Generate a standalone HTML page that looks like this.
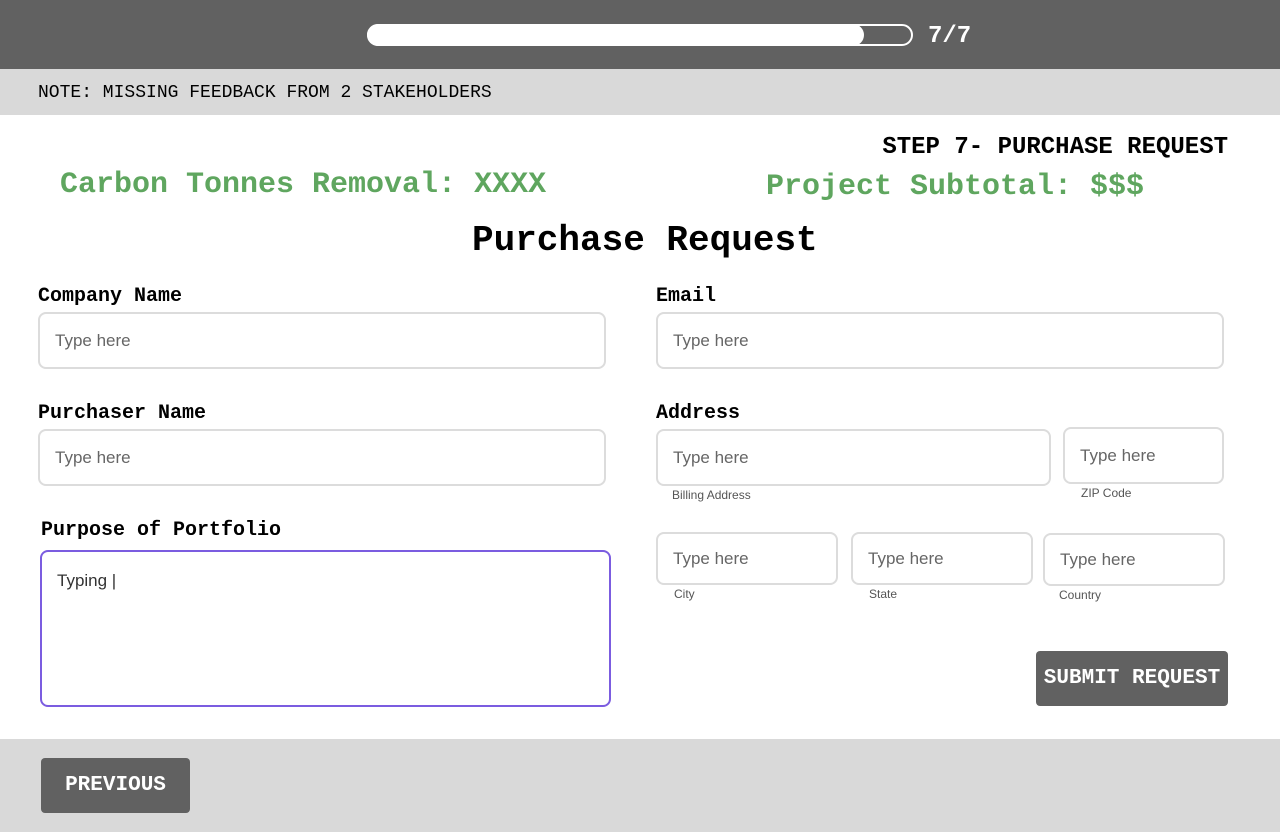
<!DOCTYPE html>
<html><head><meta charset="utf-8"><style>
*{margin:0;padding:0;box-sizing:border-box}
body{width:1280px;height:832px;background:#fff;position:relative;overflow:hidden;font-family:"Liberation Mono",monospace;color:#000}
.a{position:absolute;white-space:nowrap}
.lbl{font-weight:bold;font-size:20px;line-height:24px}
.in{position:absolute;border:2px solid #dcdcdc;border-radius:8px;background:#fff;font-family:"Liberation Sans",sans-serif;font-size:17px;color:#666;padding-left:15px;display:flex;align-items:center}
.sm{position:absolute;font-family:"Liberation Sans",sans-serif;font-size:12px;color:#555;white-space:nowrap}
.btn{position:absolute;background:#616161;color:#fff;font-weight:bold;font-size:21px;border-radius:4px;display:flex;align-items:center;justify-content:center}
.g{color:#5fa65f;font-weight:bold}
</style></head><body>
<div class="a" style="left:0;top:0;width:1280px;height:69px;background:#616161"></div>
<div class="a" style="left:367px;top:24px;width:546px;height:22px;border:2px solid #fff;border-radius:11px"></div>
<div class="a" style="left:367px;top:24px;width:497px;height:22px;background:#fff;border-radius:11px"></div>
<div class="a" style="left:928px;top:22px;font-size:24px;line-height:30px;color:#fff;font-weight:bold">7/7</div>
<div class="a" style="left:0;top:69px;width:1280px;height:46px;background:#d9d9d9"></div>
<div class="a" style="left:38px;top:81px;font-size:18px;line-height:24px">NOTE: MISSING FEEDBACK FROM 2 STAKEHOLDERS</div>
<div class="a" style="right:52px;top:133px;font-size:24px;line-height:30px;font-weight:bold">STEP 7- PURCHASE REQUEST</div>
<div class="a g" style="left:60px;top:166px;font-size:30px;line-height:38px">Carbon Tonnes Removal: XXXX</div>
<div class="a g" style="left:766px;top:168px;font-size:30px;line-height:38px">Project Subtotal: $$$</div>
<div class="a" style="left:472px;top:219px;font-size:36px;line-height:44px;font-weight:bold">Purchase Request</div>
<div class="a lbl" style="left:38px;top:285px">Company Name</div>
<div class="in" style="left:38px;top:312px;width:568px;height:57px">Type here</div>
<div class="a lbl" style="left:38px;top:402px">Purchaser Name</div>
<div class="in" style="left:38px;top:429px;width:568px;height:57px">Type here</div>
<div class="a lbl" style="left:41px;top:519px">Purpose of Portfolio</div>
<div class="in" style="left:40px;top:550px;width:571px;height:157px;border-color:#7b5ce0;align-items:flex-start;padding-top:19px;color:#333">Typing |</div>
<div class="a lbl" style="left:656px;top:285px">Email</div>
<div class="in" style="left:656px;top:312px;width:568px;height:57px">Type here</div>
<div class="a lbl" style="left:656px;top:402px">Address</div>
<div class="in" style="left:656px;top:429px;width:395px;height:57px">Type here</div>
<div class="sm" style="left:672px;top:488px">Billing Address</div>
<div class="in" style="left:1063px;top:427px;width:161px;height:57px">Type here</div>
<div class="sm" style="left:1081px;top:486px">ZIP Code</div>
<div class="in" style="left:656px;top:532px;width:182px;height:53px">Type here</div>
<div class="sm" style="left:674px;top:587px">City</div>
<div class="in" style="left:851px;top:532px;width:182px;height:53px">Type here</div>
<div class="sm" style="left:869px;top:587px">State</div>
<div class="in" style="left:1043px;top:533px;width:182px;height:53px">Type here</div>
<div class="sm" style="left:1059px;top:588px">Country</div>
<div class="btn" style="left:1036px;top:651px;width:192px;height:55px">SUBMIT REQUEST</div>
<div class="a" style="left:0;top:739px;width:1280px;height:93px;background:#d9d9d9"></div>
<div class="btn" style="left:41px;top:758px;width:149px;height:55px">PREVIOUS</div>
</body></html>
